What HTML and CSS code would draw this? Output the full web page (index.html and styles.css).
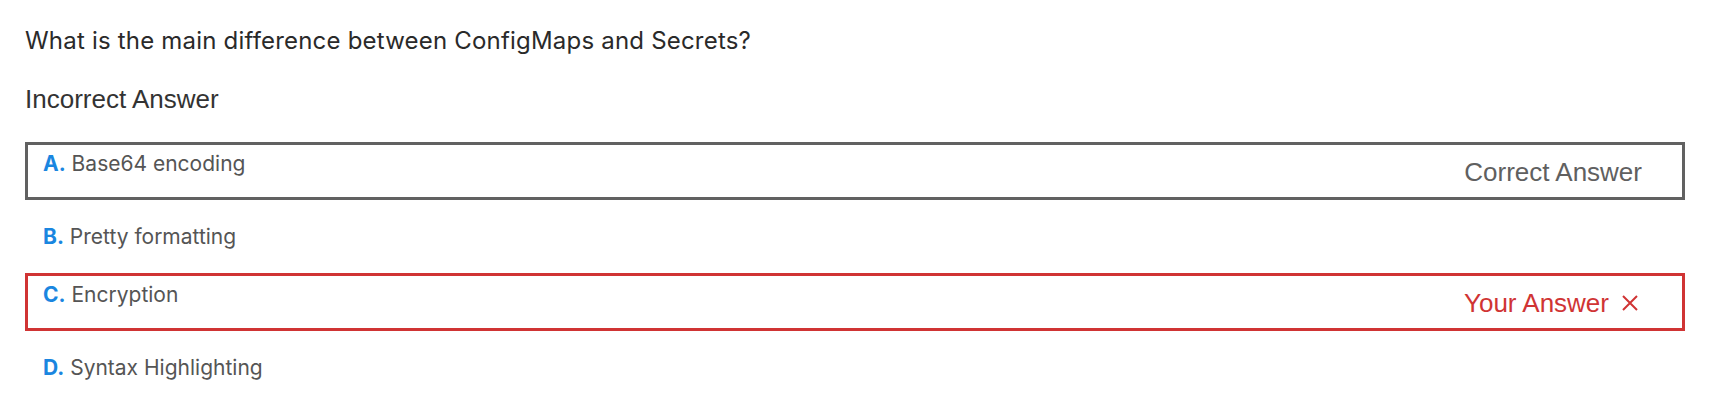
FILE: index.html
```html
<!DOCTYPE html>
<html lang="en">
<head>
<meta charset="utf-8">
<title>Question Review</title>
<link rel="stylesheet" href="styles.css">
</head>
<body>
<div class="quiz">
  <h2 class="question">What is the main difference between ConfigMaps and Secrets?</h2>
  <div class="result">Incorrect Answer</div>
  <ul class="options">
    <li class="option option--correct">
      <span class="option-text"><b class="letter">A.</b> Base64 encoding</span>
      <span class="tag tag--correct">Correct Answer</span>
    </li>
    <li class="option">
      <span class="option-text"><b class="letter">B.</b> Pretty formatting</span>
    </li>
    <li class="option option--wrong">
      <span class="option-text"><b class="letter">C.</b> Encryption</span>
      <span class="tag tag--wrong">Your Answer
        <svg class="x-icon" width="20" height="16" viewBox="0 0 20 16" aria-hidden="true"><path d="M1 1 L15 15 M15 1 L1 15" stroke="currentColor" stroke-width="2" fill="none"/></svg>
      </span>
    </li>
    <li class="option">
      <span class="option-text"><b class="letter">D.</b> Syntax Highlighting</span>
    </li>
  </ul>
</div>
</body>
</html>
```
FILE: styles.css
```css
* { box-sizing: border-box; }
html, body { margin: 0; padding: 0; background: #ffffff; }
.quiz {
  padding: 27px 33px 0 25px;
}
.question {
  margin: 0;
  font-family: Inter, "Noto Sans", sans-serif;
  font-weight: 400;
  font-size: 24px;
  line-height: 28px;
  letter-spacing: 0.2px;
  color: #2a2a2a;
}
.result {
  margin-top: 30px;
  font-family: "Liberation Sans", Arial, sans-serif;
  font-size: 26px;
  line-height: 28px;
  color: #333333;
}
.options {
  list-style: none;
  margin: 29px 0 0;
  padding: 0;
}
.option {
  display: flex;
  justify-content: space-between;
  align-items: flex-start;
  height: 73px;
  padding: 24px 40px 0 18px;
  border: 3px solid transparent;
  border-width: 0;
}
.option--correct, .option--wrong {
  height: 58px;
  border-width: 3px;
  padding: 6px 40px 0 15px;
}
.option--correct { border-color: #616161; }
.option--wrong { border-color: #d03434; }
.option-text {
  font-family: Inter, "Noto Sans", sans-serif;
  font-size: 21px;
  line-height: 26px;
  color: #555555;
}
.letter {
  font-weight: 700;
  color: #1a86e0;
}
.tag {
  display: flex;
  align-items: center;
  margin-top: 7px;
  font-family: "Liberation Sans", Arial, sans-serif;
  font-size: 26px;
  line-height: 28px;
}
.tag--correct { color: #606060; }
.tag--wrong { color: #d03434; }
.x-icon {
  margin-left: 13px;
  display: block;
}
```
